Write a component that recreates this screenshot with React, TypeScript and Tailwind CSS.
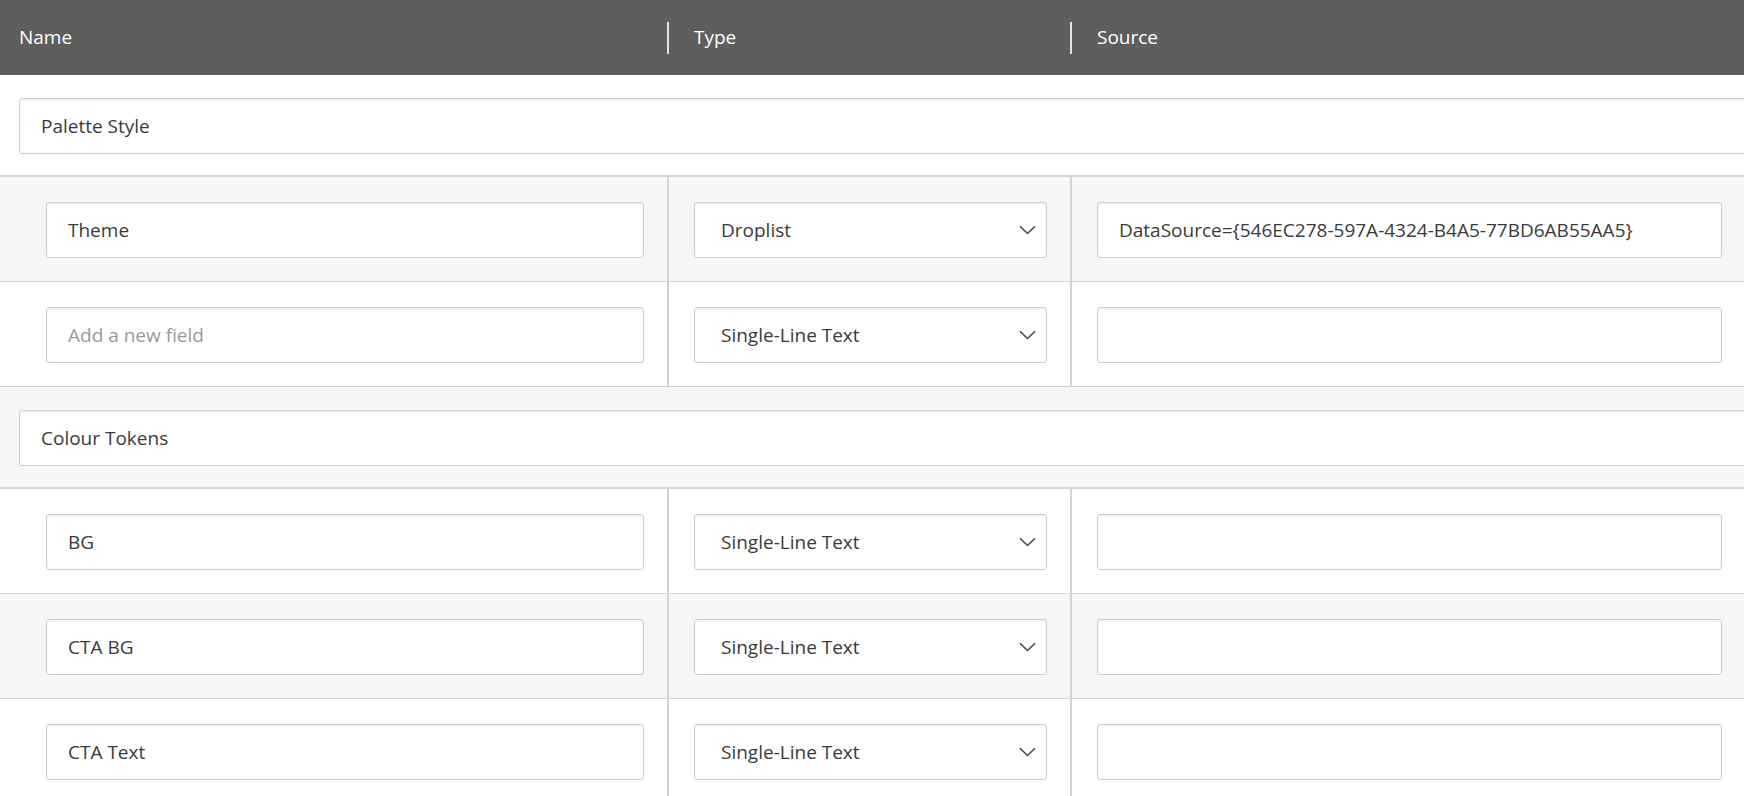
import { ChangeEvent, useState } from 'react';

type Row =
  | { kind: 'section'; name: string }
  | { kind: 'field'; name: string; type: string; source: string; placeholder?: boolean };

const rows: Row[] = [
  { kind: 'section', name: 'Palette Style' },
  { kind: 'field', name: 'Theme', type: 'Droplist', source: 'DataSource={546EC278-597A-4324-B4A5-77BD6AB55AA5}' },
  { kind: 'field', name: '', type: 'Single-Line Text', source: '', placeholder: true },
  { kind: 'section', name: 'Colour Tokens' },
  { kind: 'field', name: 'BG', type: 'Single-Line Text', source: '' },
  { kind: 'field', name: 'CTA BG', type: 'Single-Line Text', source: '' },
  { kind: 'field', name: 'CTA Text', type: 'Single-Line Text', source: '' },
];

const inputCls =
  "h-14 w-full rounded-[3px] border border-[#cdcdcd] bg-white px-[21px] text-[19px] text-[#3a3a3a] shadow-[inset_0_1px_2px_rgba(0,0,0,0.07)] outline-none placeholder:text-[#9a9a9a]";

function Chevron() {
  return (
    <svg width="17" height="10" viewBox="0 0 17 10" fill="none">
      <path d="M1 1.2l7.5 7.3L16 1.2" stroke="#474747" strokeWidth="1.6" />
    </svg>
  );
}

export default function App() {
  const [values, setValues] = useState(rows.map((r) => r.name));

  const update = (i: number) => (e: ChangeEvent<HTMLInputElement>) => {
    const next = [...values];
    next[i] = e.target.value;
    setValues(next);
  };

  return (
    <div className="h-[796px] w-[1744px] overflow-hidden bg-white font-['Open_Sans',sans-serif]">
      {/* header */}
      <div className="grid h-[75px] grid-cols-[667px_403px_1fr] items-center bg-[#5e5e5e] text-[19px] text-white">
        <div className="pl-[19px]">Name</div>
        <div className="flex h-[32px] items-center border-l-2 border-[#e2e2e2] pl-[25px]">Type</div>
        <div className="flex h-[32px] items-center border-l-2 border-[#e2e2e2] pl-[25px]">Source</div>
      </div>

      {rows.map((row, i) => {
        const striped = i % 2 === 1;
        if (row.kind === 'section') {
          return (
            <div
              key={i}
              className={`overflow-hidden border-b-2 border-[#d6d6d6] pt-[23px] pb-[21px] pl-[19px] ${
                striped ? 'bg-[#f6f6f6]' : 'bg-white'
              }`}
            >
              <input value={values[i]} onChange={update(i)} className={`${inputCls} !w-[1760px]`} />
            </div>
          );
        }
        return (
          <div
            key={i}
            className={`grid grid-cols-[667px_403px_1fr] border-b border-[#d3d3d3] ${
              striped ? 'bg-[#f6f6f6]' : 'bg-white'
            }`}
          >
            <div className="pt-[25px] pb-[23px] pl-[46px] pr-[23px]">
              <input
                value={values[i]}
                onChange={update(i)}
                placeholder={row.placeholder ? 'Add a new field' : ''}
                className={inputCls}
              />
            </div>
            <div className="border-l-2 border-[#d3d3d3] pt-[25px] pb-[23px] pl-[25px] pr-[23px]">
              <div className="flex h-14 items-center justify-between rounded-[3px] border border-[#cdcdcd] bg-white pl-[26px] pr-[10px] text-[19px] text-[#3a3a3a] shadow-[inset_0_1px_2px_rgba(0,0,0,0.07)]">
                <span>{row.type}</span>
                <Chevron />
              </div>
            </div>
            <div className="border-l-2 border-[#d3d3d3] pt-[25px] pb-[23px] pl-[25px] pr-[22px]">
              <input defaultValue={row.source} className={inputCls} />
            </div>
          </div>
        );
      })}
    </div>
  );
}
